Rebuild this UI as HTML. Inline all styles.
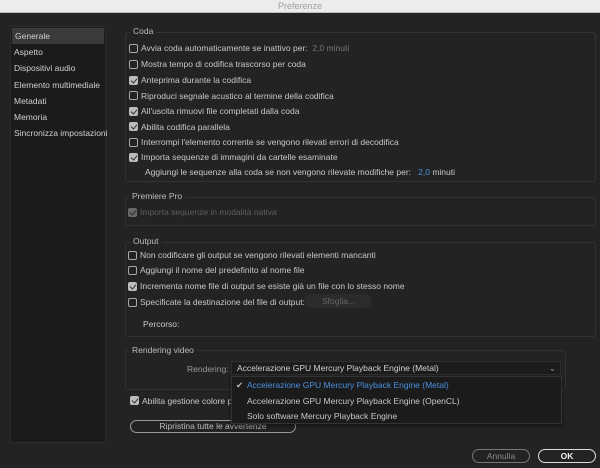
<!DOCTYPE html>
<html><head><meta charset="utf-8"><style>
*{margin:0;padding:0;box-sizing:border-box}
body{width:600px;height:468px;background:#232323;font-family:"Liberation Sans",sans-serif;font-size:8.5px;color:#c8c8c8;position:relative;overflow:hidden}
.a{position:absolute;white-space:nowrap}
.tb{left:0;top:0;width:600px;height:13px;background:#ececec;border-bottom:1px solid #bdbdbd;color:#a0a0a0;text-align:center;font-size:9px;line-height:12px}
.side{left:10px;top:26px;width:96px;height:417px;background:#1b1b1b;border:1px solid #2c2c2c}
.side div{height:16.2px;line-height:16px;padding-left:3px;color:#d0d0d0}
.side .sel{background:#3a3a3a;margin:1px 1px 0 1px}
.grp{border:1px solid #333;border-radius:3px}
.gt{background:#232323;padding:0 3px;color:#bdbdbd}
.cb{width:9px;height:9px;border:1px solid #a8a8a8;border-radius:2px;background:#232323}
.ck{background:#bcbcbc;border-color:#bcbcbc}
.ck::after{content:"";position:absolute;left:2px;top:0px;width:3px;height:5px;border:solid #333;border-width:0 1.5px 1.5px 0;transform:rotate(40deg)}
.btn{border:1px solid #9a9a9a;border-radius:8px;text-align:center;color:#bcbcbc;line-height:11px}
</style></head><body>
<div class="a tb">Preferenze</div>
<div class="a side"><div class="sel">Generale</div><div>Aspetto</div><div>Dispositivi audio</div><div>Elemento multimediale</div><div>Metadati</div><div>Memoria</div><div>Sincronizza impostazioni</div></div>

<div class="a grp" style="left:125px;top:32px;width:471px;height:150px"></div>
<div class="a gt" style="left:130px;top:26px">Coda</div>
<div class="a cb" style="left:129px;top:44px"></div><div class="a" style="left:141px;top:43px">Avvia coda automaticamente se inattivo per: <span style="color:#777">&nbsp;2,0 minuti</span></div>
<div class="a cb" style="left:129px;top:60px"></div><div class="a" style="left:141px;top:59px">Mostra tempo di codifica trascorso per coda</div>
<div class="a cb ck" style="left:129px;top:76px"></div><div class="a" style="left:141px;top:75px">Anteprima durante la codifica</div>
<div class="a cb" style="left:129px;top:91px"></div><div class="a" style="left:141px;top:91px">Riproduci segnale acustico al termine della codifica</div>
<div class="a cb ck" style="left:129px;top:107px"></div><div class="a" style="left:141px;top:106px">All'uscita rimuovi file completati dalla coda</div>
<div class="a cb ck" style="left:129px;top:122px"></div><div class="a" style="left:141px;top:122px">Abilita codifica parallela</div>
<div class="a cb" style="left:129px;top:138px"></div><div class="a" style="left:141px;top:137px">Interrompi l'elemento corrente se vengono rilevati errori di decodifica</div>
<div class="a cb ck" style="left:129px;top:153px"></div><div class="a" style="left:141px;top:152px">Importa sequenze di immagini da cartelle esaminate</div>
<div class="a" style="left:145px;top:167px">Aggiungi le sequenze alla coda se non vengono rilevate modifiche per: &nbsp;&nbsp;<span style="color:#4a90e0">2,0</span> minuti</div>

<div class="a grp" style="left:125px;top:197px;width:471px;height:29px"></div>
<div class="a gt" style="left:129px;top:191px">Premiere Pro</div>
<div class="a cb ck" style="left:128px;top:208px;opacity:.45"></div><div class="a" style="left:140px;top:207px;color:#5e5e5e">Importa sequenze in modalità nativa</div>

<div class="a grp" style="left:125px;top:242px;width:471px;height:95px"></div>
<div class="a gt" style="left:130px;top:236px">Output</div>
<div class="a cb" style="left:128px;top:251px"></div><div class="a" style="left:140px;top:250px">Non codificare gli output se vengono rilevati elementi mancanti</div>
<div class="a cb" style="left:128px;top:266px"></div><div class="a" style="left:140px;top:265px">Aggiungi il nome del predefinito al nome file</div>
<div class="a cb ck" style="left:128px;top:282px"></div><div class="a" style="left:140px;top:281px">Incrementa nome file di output se esiste già un file con lo stesso nome</div>
<div class="a cb" style="left:128px;top:298px"></div><div class="a" style="left:140px;top:297px">Specificate la destinazione del file di output:</div>
<div class="a" style="left:305px;top:294px;width:67px;height:14px;background:#2b2b2b;border-radius:7px;color:#666;text-align:center;line-height:14px">Sfoglia...</div>
<div class="a" style="left:143px;top:319px">Percorso:</div>

<div class="a grp" style="left:125px;top:350px;width:441px;height:40px"></div>
<div class="a gt" style="left:129px;top:345px">Rendering video</div>
<div class="a" style="left:187px;top:364px;color:#999">Rendering:</div>
<div class="a" style="left:231px;top:361px;width:330px;height:14px;background:#1c1c1c;border:1px solid #2e2e2e;padding-left:5px;line-height:12px;color:#d0d0d0">Accelerazione GPU Mercury Playback Engine (Metal)<span style="position:absolute;right:4px;color:#999">⌄</span></div>

<div class="a cb ck" style="left:130px;top:396px"></div><div class="a" style="left:142px;top:396px">Abilita gestione colore per</div>
<div class="a btn" style="left:130px;top:420px;width:166px;height:13px">Ripristina tutte le avvertenze</div>

<div class="a" style="left:231px;top:376px;width:331px;height:48px;background:#1b1b1b;border:1px solid #333;box-shadow:0 2px 4px rgba(0,0,0,.5)">
<div class="a" style="left:4px;top:3px;color:#bbb">✔</div>
<div class="a" style="left:15px;top:3px;color:#4a90e0">Accelerazione GPU Mercury Playback Engine (Metal)</div>
<div class="a" style="left:15px;top:19px">Accelerazione GPU Mercury Playback Engine (OpenCL)</div>
<div class="a" style="left:15px;top:34px">Solo software Mercury Playback Engine</div>
</div>

<div class="a btn" style="left:472px;top:449px;width:58px;height:14px;line-height:12px;color:#888;border-color:#777">Annulla</div>
<div class="a btn" style="left:538px;top:449px;width:58px;height:14px;line-height:12px;color:#eee;border-color:#ddd;font-weight:bold">OK</div>
</body></html>
